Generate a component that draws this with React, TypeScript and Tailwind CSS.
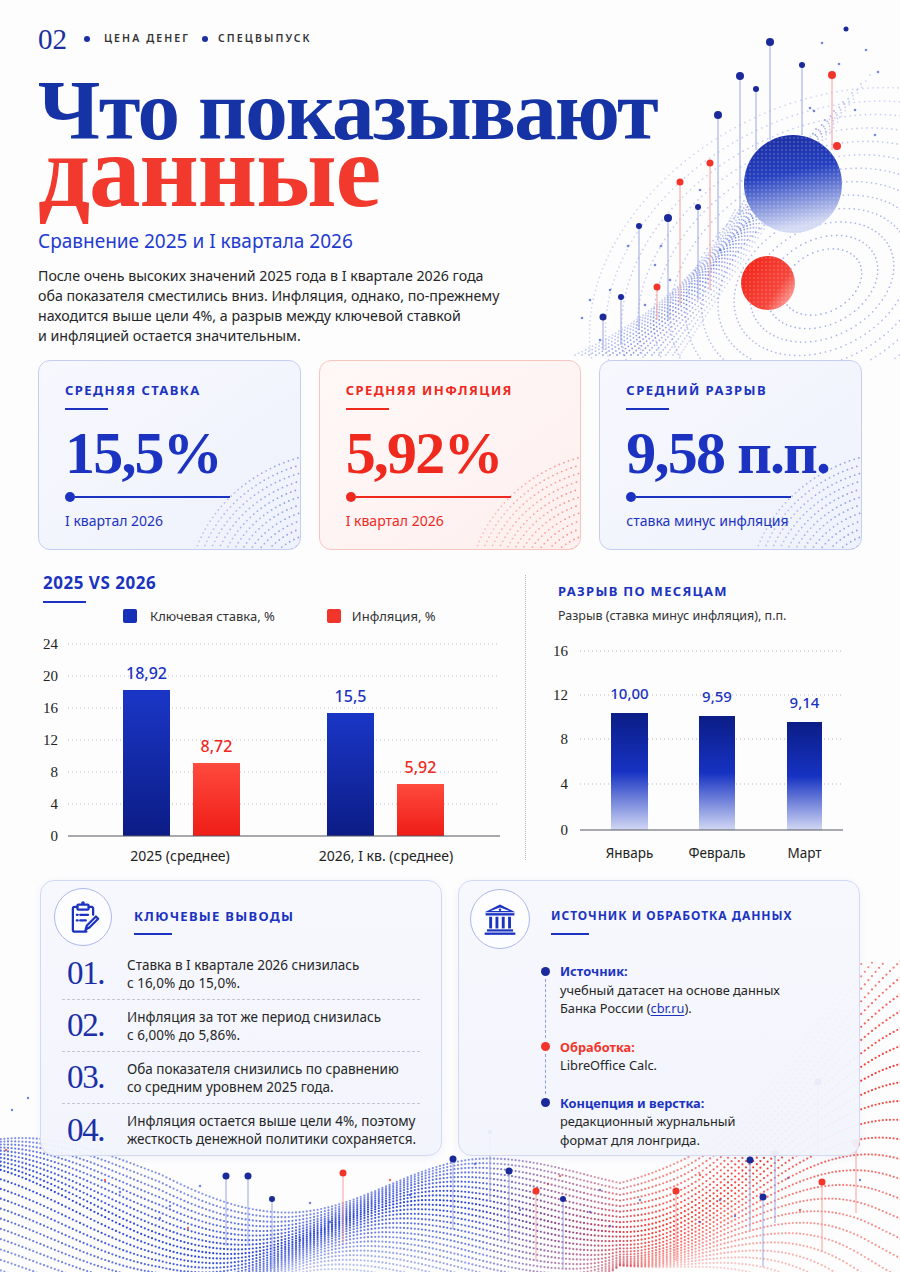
import React from 'react';

type Dot = { x: number; y: number; r: number; c: string; o: number };

const BLUE_RGB = [30, 58, 210];
const RED_RGB = [242, 50, 40];

function mixColor(t: number) {
  const k = Math.max(0, Math.min(1, t));
  const c = BLUE_RGB.map((b, i) => Math.round(b + (RED_RGB[i] - b) * k));
  return `rgb(${c[0]},${c[1]},${c[2]})`;
}

// base line of the bottom wave (page coordinates)
const wavePts: [number, number][] = [
  [-60, 1160],
  [230, 1254],
  [430, 1200],
  [625, 1232],
  [930, 1060],
];

function baseY(x: number) {
  for (let i = 0; i < wavePts.length - 1; i++) {
    const [x0, y0] = wavePts[i];
    const [x1, y1] = wavePts[i + 1];
    if (x >= x0 && x <= x1) {
      const t = (x - x0) / (x1 - x0);
      const s = (1 - Math.cos(Math.PI * t)) / 2;
      return y0 + (y1 - y0) * s;
    }
  }
  return wavePts[wavePts.length - 1][1];
}

const waveDots: Dot[] = (() => {
  const out: Dot[] = [];
  const N = 26;
  for (let i = 0; i < N; i++) {
    const off = (i - 9) * 4.6;
    const op = Math.max(0.2, 0.95 - Math.abs(i - 9) * 0.045);
    for (let x = -10; x <= 910; x += 3.6) {
      const up = off < 0 ? Math.max(0, (160 - x) / 160) * -0.5 : Math.max(0, (160 - x) / 160) * 0.6;
      const spread = 1 + Math.max(0, (x - 620) / 110) * 1.3 + up;
      const y = baseY(x + off * 1.4) + off * spread;
      if (y < 960 || y > 1275) continue;
      out.push({ x, y: y - 960, r: 1.1, c: mixColor((x - 470) / 180), o: op });
    }
  }
  return out;
})();

// concentric dotted rings of the top illustration
const ringDots: Dot[] = (() => {
  const out: Dot[] = [];
  const cx = 822;
  const cy = 282;
  const rot = (-28 * Math.PI) / 180;
  for (let k = 0; k < 13; k++) {
    const rx = 42 + k * 17;
    const ry = rx * 0.72;
    const n = Math.round((2 * Math.PI * rx) / 5.5);
    for (let j = 0; j < n; j++) {
      const a = (j / n) * Math.PI * 2;
      const ex = rx * Math.cos(a);
      const ey = ry * Math.sin(a);
      const x = cx + ex * Math.cos(rot) - ey * Math.sin(rot);
      const y = cy + ex * Math.sin(rot) + ey * Math.cos(rot);
      if (y > 360 || x > 905) continue;
      out.push({ x, y, r: 0.85, c: '#4a63d8', o: 0.5 - k * 0.02 });
    }
  }
  return out;
})();

// S-shaped band of dots rising to the blue sphere
const bandDots: Dot[] = (() => {
  const out: Dot[] = [];
  for (let j = 0; j < 16; j++) {
    const p0 = [575 + j * 7, 355];
    const p1 = [690 + j * 3, 300 - j * 2];
    const p2 = [735 + j * 9, 210 - j * 9];
    for (let s = 0; s <= 64; s++) {
      const t = s / 64;
      const x = (1 - t) * (1 - t) * p0[0] + 2 * (1 - t) * t * p1[0] + t * t * p2[0];
      const y = (1 - t) * (1 - t) * p0[1] + 2 * (1 - t) * t * p1[1] + t * t * p2[1];
      out.push({ x, y, r: 0.9, c: '#2d48d2', o: 0.6 - Math.abs(j - 7) * 0.05 });
    }
  }
  return out;
})();

const topStems = [
  { x: 770, y: 42, to: 140, c: '#1a2a9a', r: 4 },
  { x: 740, y: 76, to: 215, c: '#1a2a9a', r: 4 },
  { x: 756, y: 89, to: 150, c: '#1a2a9a', r: 3 },
  { x: 718, y: 115, to: 240, c: '#1a2a9a', r: 4 },
  { x: 802, y: 65, to: 135, c: '#1a2a9a', r: 3 },
  { x: 846, y: 29, to: 29, c: '#1a2a9a', r: 2.5 },
  { x: 832, y: 75, to: 150, c: '#f2352b', r: 4 },
  { x: 837, y: 146, to: 146, c: '#f2352b', r: 4 },
  { x: 710, y: 163, to: 290, c: '#f2352b', r: 3.5 },
  { x: 680, y: 182, to: 305, c: '#f2352b', r: 3.5 },
  { x: 698, y: 207, to: 300, c: '#1a2a9a', r: 3 },
  { x: 668, y: 218, to: 320, c: '#1a2a9a', r: 4 },
  { x: 639, y: 226, to: 330, c: '#1a2a9a', r: 3 },
  { x: 657, y: 287, to: 320, c: '#f2352b', r: 3.5 },
  { x: 621, y: 297, to: 345, c: '#1a2a9a', r: 3 },
  { x: 603, y: 317, to: 350, c: '#1a2a9a', r: 3.5 },
];

const topSpecks = [
  [661, 246], [628, 246], [655, 265], [610, 290], [582, 318], [600, 340], [645, 305], [670, 280],
  [822, 43], [866, 50], [839, 64], [878, 72], [810, 108], [814, 111], [855, 110], [875, 135],
  [700, 190], [720, 250], [590, 300],
];

const bottomStems = [
  { x: 226, y: 1176, c: '#1a2a9a', r: 3.5 },
  { x: 248, y: 1176, c: '#1a2a9a', r: 3.5 },
  { x: 343, y: 1173, c: '#f2352b', r: 3.5 },
  { x: 272, y: 1199, c: '#1a2a9a', r: 3 },
  { x: 453, y: 1159, c: '#1a2a9a', r: 3.5 },
  { x: 509, y: 1171, c: '#1a2a9a', r: 3.5 },
  { x: 536, y: 1191, c: '#f2352b', r: 3.5 },
  { x: 676, y: 1191, c: '#f2352b', r: 3.5 },
  { x: 563, y: 1199, c: '#1a2a9a', r: 3 },
  { x: 750, y: 1160, c: '#1a2a9a', r: 3.5 },
  { x: 775, y: 1153, c: '#1a2a9a', r: 3 },
  { x: 763, y: 1197, c: '#1a2a9a', r: 3.5 },
  { x: 856, y: 1143, c: '#f2352b', r: 4 },
  { x: 822, y: 1182, c: '#f2352b', r: 3.5 },
  { x: 818, y: 1082, c: '#1a2a9a', r: 3.5 },
  { x: 490, y: 1132, c: '#1a2a9a', r: 2 },
];

const bottomSpecks = [
  [105, 1180], [120, 1192], [170, 1206], [160, 1218], [188, 1228], [200, 1186], [310, 1203],
  [330, 1222], [390, 1180], [410, 1195], [475, 1164], [520, 1210], [548, 1184], [590, 1212],
  [610, 1226], [640, 1200], [700, 1175], [720, 1200], [735, 1216], [788, 1178], [800, 1210],
  [700, 1222], [600, 1190], [300, 1240], [560, 1176], [860, 1180], [12, 1110], [28, 1098], [6, 1150],
];

function TopArt() {
  return (
    <svg className="absolute left-0 top-0 pointer-events-none" width={900} height={365} viewBox="0 0 900 365">
      <defs>
        <linearGradient id="blueSphere" x1="0" y1="0" x2="0.2" y2="1">
          <stop offset="0" stopColor="#1c2c9e" />
          <stop offset="0.45" stopColor="#2540c0" />
          <stop offset="1" stopColor="#d4daf4" />
        </linearGradient>
        <linearGradient id="redSphere" x1="0" y1="0.3" x2="1" y2="1">
          <stop offset="0" stopColor="#f2261c" />
          <stop offset="0.6" stopColor="#f5463c" />
          <stop offset="1" stopColor="#ffc9c4" />
        </linearGradient>
        <pattern id="sphereDots" width="4" height="4" patternUnits="userSpaceOnUse">
          <circle cx="2" cy="2" r="0.8" fill="#ffffff" />
        </pattern>
      </defs>
      {ringDots.map((d, i) => (
        <circle key={`r${i}`} cx={d.x} cy={d.y} r={d.r} fill={d.c} opacity={d.o} />
      ))}
      {bandDots.map((d, i) => (
        <circle key={`b${i}`} cx={d.x} cy={d.y} r={d.r} fill={d.c} opacity={d.o} />
      ))}
      {topStems.map((s, i) => (
        <g key={`s${i}`}>
          <line x1={s.x} y1={s.y} x2={s.x} y2={s.to} stroke={s.c === '#f2352b' ? '#f6a09a' : '#9aa6e0'} strokeWidth={1} />
          <circle cx={s.x} cy={s.y} r={s.r} fill={s.c} />
        </g>
      ))}
      {topSpecks.map(([x, y], i) => (
        <circle key={`p${i}`} cx={x} cy={y} r={1.3} fill="#3d55d0" opacity={0.7} />
      ))}
      <circle cx={793} cy={184} r={49} fill="url(#blueSphere)" />
      <circle cx={793} cy={184} r={49} fill="url(#sphereDots)" opacity={0.35} />
      <circle cx={768} cy={283} r={27} fill="url(#redSphere)" />
      <circle cx={768} cy={283} r={27} fill="url(#sphereDots)" opacity={0.3} />
    </svg>
  );
}

function BottomArt() {
  return (
    <svg className="absolute left-0 top-[960px] pointer-events-none" width={900} height={312} viewBox="0 0 900 312">
      {waveDots.map((d, i) => (
        <circle key={`w${i}`} cx={d.x} cy={d.y} r={d.r} fill={d.c} opacity={d.o} />
      ))}
      {bottomStems.map((s, i) => (
        <g key={`bs${i}`}>
          <line x1={s.x} y1={s.y - 960} x2={s.x} y2={s.y - 960 + 70} stroke={s.c === '#f2352b' ? '#f6a09a' : '#9aa6e0'} strokeWidth={1} />
          <circle cx={s.x} cy={s.y - 960} r={s.r} fill={s.c} />
        </g>
      ))}
      {bottomSpecks.map(([x, y], i) => (
        <circle key={`bp${i}`} cx={x} cy={y - 960} r={1.2} fill={i % 4 === 0 ? '#f2352b' : '#3d55d0'} opacity={0.75} />
      ))}
    </svg>
  );
}

function CornerDots({ color }: { color: string }) {
  const dots: { x: number; y: number; o: number }[] = [];
  for (let k = 0; k < 12; k++) {
    const R = 60 + k * 9;
    const n = Math.round((R * Math.PI) / 2 / 5);
    for (let j = 0; j <= n; j++) {
      const a = Math.PI + (j / n) * (Math.PI / 2);
      const x = 175 + R * Math.cos(a) + k * 2;
      const y = 175 + R * Math.sin(a) * 0.9;
      if (x < 0 || y < 0 || x > 150 || y > 130) continue;
      dots.push({ x, y, o: 0.15 + (x / 150) * 0.35 });
    }
  }
  return (
    <svg className="absolute right-0 bottom-0 pointer-events-none" width={150} height={130} viewBox="0 0 150 130">
      {dots.map((d, i) => (
        <circle key={i} cx={d.x} cy={d.y} r={0.9} fill={color} opacity={d.o} />
      ))}
    </svg>
  );
}

interface StatCardProps {
  label: string;
  value: string;
  note: string;
  red?: boolean;
}

function StatCard({ label, value, note, red }: StatCardProps) {
  const accent = red ? 'text-[#f0291f]' : 'text-[#1b33c0]';
  return (
    <div
      className={`relative h-[190px] overflow-hidden rounded-[12px] border px-[26px] pt-[20px] ${
        red ? 'border-[#f8c4c0] bg-gradient-to-br from-[#fff8f7] to-[#fdf0ef]' : 'border-[#c6cdf2] bg-gradient-to-br from-[#f7f8fe] to-[#eff2fc]'
      }`}
    >
      <CornerDots color={red ? '#f2352b' : '#2d48d2'} />
      <div className={`relative whitespace-nowrap text-[13px] font-bold leading-[18px] tracking-[0.11em] ${accent}`}>{label}</div>
      <div className={`relative mt-[9px] h-[2px] w-[43px] ${red ? 'bg-[#f0291f]' : 'bg-[#1b33c0]'}`} />
      <div
        className={`relative mt-[8px] whitespace-nowrap font-['Liberation_Serif',serif] text-[60px] font-bold leading-[70px] tracking-[-0.03em] ${accent}`}
      >
        {value}
      </div>
      <div className="relative mt-[4px] flex items-center">
        <div className={`h-[10px] w-[10px] rounded-full ${red ? 'bg-[#f0291f]' : 'bg-[#1b33c0]'}`} />
        <div className={`h-[1.5px] w-[155px] ${red ? 'bg-[#f0291f]' : 'bg-[#1b33c0]'}`} />
      </div>
      <div className={`relative mt-[9px] text-[14px] leading-[20px] ${accent}`}>{note}</div>
    </div>
  );
}

function ClipboardIcon() {
  return (
    <svg width={36} height={36} viewBox="0 0 32 32" fill="none" stroke="#1b33c0" strokeWidth={2} strokeLinecap="round" strokeLinejoin="round">
      <path d="M11 7H8.5A1.5 1.5 0 0 0 7 8.5v19A1.5 1.5 0 0 0 8.5 29H19" />
      <path d="M21 7h2.5A1.5 1.5 0 0 1 25 8.5V14" />
      <rect x="11" y="5" width="10" height="4.5" rx="1" />
      <circle cx="16" cy="3.6" r="1" fill="#1b33c0" strokeWidth={1.2} />
      <path d="M10.5 14h0.8M13.5 14h7M10.5 19h0.8M13.5 19h5" />
      <path d="M27.5 15.5l2 2-8 8-3 1 1-3z" />
      <path d="M19.5 26.5l-1.5 1.5" />
    </svg>
  );
}

function BankIcon() {
  return (
    <svg width={36} height={36} viewBox="0 0 40 40" fill="#1b33c0">
      <path d="M20 4 L37 12.5 H3 Z M20 7.2 L9.5 11 H30.5 Z" fillRule="evenodd" />
      <circle cx={20} cy={9.6} r={1.4} fill="#1b33c0" />
      <rect x="4" y="13.5" width="32" height="2.6" />
      <rect x="8" y="17.5" width="3.2" height="13" />
      <rect x="15" y="17.5" width="3.2" height="13" />
      <rect x="22" y="17.5" width="3.2" height="13" />
      <rect x="29" y="17.5" width="3.2" height="13" />
      <rect x="5.5" y="31.5" width="29" height="2.4" />
      <rect x="3" y="35" width="34" height="2.6" />
    </svg>
  );
}

const findings = [
  ['01.', 'Ставка в I квартале 2026 снизилась', 'с 16,0% до 15,0%.'],
  ['02.', 'Инфляция за тот же период снизилась', 'с 6,00% до 5,86%.'],
  ['03.', 'Оба показателя снизились по сравнению', 'со средним уровнем 2025 года.'],
  ['04.', 'Инфляция остается выше цели 4%, поэтому', 'жесткость денежной политики сохраняется.'],
];

function CompareChart() {
  const grid = [24, 20, 16, 12, 8, 4];
  const y = (v: number) => 836 - v * 8;
  const bars = [
    { x: 123, top: 690, c: 'url(#barBlue)', label: '18,92', lc: '#1b33c0' },
    { x: 193, top: 763, c: 'url(#barRed)', label: '8,72', lc: '#f0291f' },
    { x: 327, top: 713, c: 'url(#barBlue)', label: '15,5', lc: '#1b33c0' },
    { x: 397, top: 784, c: 'url(#barRed)', label: '5,92', lc: '#f0291f' },
  ];
  return (
    <svg width={470} height={240} viewBox="38 628 470 240" className="block">
      <defs>
        <linearGradient id="barBlue" x1="0" y1="0" x2="0" y2="1">
          <stop offset="0" stopColor="#1a36c6" />
          <stop offset="1" stopColor="#0c1c86" />
        </linearGradient>
        <linearGradient id="barRed" x1="0" y1="0" x2="0" y2="1">
          <stop offset="0" stopColor="#ff4a3e" />
          <stop offset="1" stopColor="#ee1d17" />
        </linearGradient>
      </defs>
      {grid.map((v) => (
        <g key={v}>
          <line x1={68} x2={500} y1={y(v)} y2={y(v)} stroke="#b8b8c0" strokeWidth={1} strokeDasharray="1 3" />
          <text x={58} y={y(v) + 5} textAnchor="end" fontFamily="Liberation Serif, serif" fontSize={15} fill="#222">
            {v}
          </text>
        </g>
      ))}
      <text x={58} y={841} textAnchor="end" fontFamily="Liberation Serif, serif" fontSize={15} fill="#222">
        0
      </text>
      {bars.map((b) => (
        <g key={b.x}>
          <rect x={b.x} y={b.top} width={47} height={836 - b.top} fill={b.c} />
          <text x={b.x + 23.5} y={b.top - 11} textAnchor="middle" fontFamily="Noto Sans, sans-serif" fontSize={16} fontWeight={500} fill={b.lc}>
            {b.label}
          </text>
        </g>
      ))}
      <line x1={68} x2={500} y1={836} y2={836} stroke="#55565e" strokeWidth={1.2} />
      <text x={180} y={861} textAnchor="middle" fontFamily="Noto Sans, sans-serif" fontSize={14} fill="#222">
        2025 (среднее)
      </text>
      <text x={386} y={861} textAnchor="middle" fontFamily="Noto Sans, sans-serif" fontSize={14} fill="#222">
        2026, I кв. (среднее)
      </text>
    </svg>
  );
}

function GapChart() {
  const ticks = [
    [16, 651],
    [12, 695],
    [8, 739],
    [4, 784],
  ];
  const bars = [
    { x: 611, w: 37, top: 713, label: '10,00', name: 'Январь' },
    { x: 699, w: 36, top: 716, label: '9,59', name: 'Февраль' },
    { x: 787, w: 35, top: 722, label: '9,14', name: 'Март' },
  ];
  return (
    <svg width={300} height={240} viewBox="550 628 300 240" className="block">
      <defs>
        <linearGradient id="gapBar" x1="0" y1="0" x2="0" y2="1">
          <stop offset="0" stopColor="#0b1d86" />
          <stop offset="0.5" stopColor="#1632c2" />
          <stop offset="1" stopColor="#d2d8f4" />
        </linearGradient>
      </defs>
      {ticks.map(([v, ty]) => (
        <g key={v}>
          <line x1={580} x2={843} y1={ty} y2={ty} stroke="#b8b8c0" strokeWidth={1} strokeDasharray="1 3" />
          <text x={568} y={ty + 5} textAnchor="end" fontFamily="Liberation Serif, serif" fontSize={15} fill="#222">
            {v}
          </text>
        </g>
      ))}
      <text x={568} y={835} textAnchor="end" fontFamily="Liberation Serif, serif" fontSize={15} fill="#222">
        0
      </text>
      {bars.map((b) => (
        <g key={b.name}>
          <rect x={b.x} y={b.top} width={b.w} height={830 - b.top} fill="url(#gapBar)" />
          <text x={b.x + b.w / 2} y={b.top - 14} textAnchor="middle" fontFamily="Noto Sans, sans-serif" fontSize={15} fontWeight={500} fill="#1b33c0">
            {b.label}
          </text>
          <text x={b.x + b.w / 2} y={858} textAnchor="middle" fontFamily="Noto Sans, sans-serif" fontSize={13.5} fill="#222">
            {b.name}
          </text>
        </g>
      ))}
      <line x1={580} x2={843} y1={830} y2={830} stroke="#55565e" strokeWidth={1.2} />
    </svg>
  );
}

export default function App() {
  return (
    <div className="relative h-[1272px] w-[900px] overflow-hidden bg-[#fdfdfe] font-['Noto_Sans',sans-serif] text-[#222]">
      <TopArt />
      <BottomArt />

      <div className="relative px-[38px] pt-[24px]">
        {/* header */}
        <div className="flex h-[30px] items-center">
          <span className="font-['Liberation_Serif',serif] text-[29px] leading-none text-[#1b2f9e]">02</span>
          <span className="ml-[17px] h-[6px] w-[6px] rounded-full bg-[#1b2f9e]" />
          <span className="ml-[14px] text-[10.5px] font-semibold tracking-[0.2em] text-[#333]">ЦЕНА ДЕНЕГ</span>
          <span className="ml-[12px] h-[6px] w-[6px] rounded-full bg-[#1b2f9e]" />
          <span className="ml-[10px] text-[10.5px] font-semibold tracking-[0.2em] text-[#333]">СПЕЦВЫПУСК</span>
        </div>

        {/* title */}
        <h1 className="mt-[24px] font-['Liberation_Serif',serif] font-bold">
          <span className="block whitespace-nowrap text-[85px] leading-[64px] tracking-[-0.02em] text-[#1633a6]">Что показывают</span>
          <span className="block whitespace-nowrap text-[103px] leading-[58px] tracking-[-0.01em] text-[#f2392e]">данные</span>
        </h1>

        <div className="mt-[29px] text-[19px] leading-[24px] text-[#1f3bd0]">Сравнение 2025 и I квартала 2026</div>
        <p className="mt-[13px] whitespace-nowrap text-[14.2px] leading-[20px] text-[#262626]">
          После очень высоких значений 2025 года в I квартале 2026 года
          <br />
          оба показателя сместились вниз. Инфляция, однако, по-прежнему
          <br />
          находится выше цели 4%, а разрыв между ключевой ставкой
          <br />и инфляцией остается значительным.
        </p>

        {/* stat cards */}
        <div className="mt-[14px] grid grid-cols-3 gap-[18px]">
          <StatCard label="СРЕДНЯЯ СТАВКА" value="15,5%" note="I квартал 2026" />
          <StatCard label="СРЕДНЯЯ ИНФЛЯЦИЯ" value="5,92%" note="I квартал 2026" red />
          <StatCard label="СРЕДНИЙ РАЗРЫВ" value="9,58 п.п." note="ставка минус инфляция" />
        </div>

        {/* charts */}
        <div className="mt-[15px] flex h-[300px]">
          <div className="w-[470px]">
            <div className="h-[63px] pl-[5px] pt-[8px]">
              <div className="text-[17px] font-bold leading-[20px] tracking-[0.03em] text-[#1b33c0]">2025 VS 2026</div>
              <div className="mt-[8px] h-[2px] w-[43px] bg-[#1b33c0]" />
              <div className="mt-[5px] flex items-center pl-[80px] text-[13px] leading-[16px] text-[#333]">
                <span className="h-[14px] w-[14px] rounded-[2px] bg-[#1630b8]" />
                <span className="ml-[13px]">Ключевая ставка, %</span>
                <span className="ml-[52px] h-[14px] w-[14px] rounded-[2px] bg-[#f2352b]" />
                <span className="ml-[11px]">Инфляция, %</span>
              </div>
            </div>
            <CompareChart />
          </div>
          <div className="ml-[17px] mt-[10px] h-[285px] border-l border-dotted border-[#b5b5c0]" />
          <div className="ml-[24px] w-[300px]">
            <div className="h-[63px] pl-[8px] pt-[17px]">
              <div className="whitespace-nowrap text-[13px] font-bold leading-[18px] tracking-[0.1em] text-[#1b33c0]">РАЗРЫВ ПО МЕСЯЦАМ</div>
              <div className="mt-[8px] whitespace-nowrap text-[12.5px] leading-[16px] text-[#333]">Разрыв (ставка минус инфляция), п.п.</div>
            </div>
            <GapChart />
          </div>
        </div>

        {/* bottom cards */}
        <div className="mt-[15px] grid grid-cols-2 gap-[16px] pl-[2px] pr-[2px]">
          <div className="h-[276px] rounded-[14px] border border-[#d3d8f3] bg-gradient-to-b from-[#f7f8fe]/95 to-[#f2f4fc]/95 px-[13px] pt-[7px] shadow-[0_2px_8px_rgba(40,60,160,0.06)]">
            <div className="flex items-start">
              <div className="flex h-[58px] w-[58px] items-center justify-center rounded-full border-[1.5px] border-[#aeb8ec] bg-white/70">
                <ClipboardIcon />
              </div>
              <div className="ml-[22px] pt-[19px]">
                <div className="text-[13px] font-bold leading-[18px] tracking-[0.1em] text-[#1b33c0]">КЛЮЧЕВЫЕ ВЫВОДЫ</div>
                <div className="mt-[8px] h-[2px] w-[38px] bg-[#1b33c0]" />
              </div>
            </div>
            <div className="mt-[2px] px-[8px]">
              {findings.map(([n, a, b], i) => (
                <div
                  key={n}
                  className={`flex h-[52px] items-center ${i < findings.length - 1 ? 'border-b border-dashed border-[#c4c6d2]' : ''}`}
                >
                  <div className="w-[65px] pl-[5px] font-['Liberation_Serif',serif] text-[33px] leading-none tracking-[-0.04em] text-[#1b2fa6]">
                    {n}
                  </div>
                  <div className="whitespace-nowrap text-[13.5px] leading-[18px] text-[#262626]">
                    <div>{a}</div>
                    <div>{b}</div>
                  </div>
                </div>
              ))}
            </div>
          </div>

          <div className="h-[276px] rounded-[14px] border border-[#d3d8f3] bg-gradient-to-b from-[#f7f8fe]/95 to-[#f2f4fc]/95 px-[11px] pt-[8px] shadow-[0_2px_8px_rgba(40,60,160,0.06)]">
            <div className="flex items-start">
              <div className="flex h-[60px] w-[60px] items-center justify-center rounded-full border-[1.5px] border-[#aeb8ec] bg-white/70">
                <BankIcon />
              </div>
              <div className="ml-[21px] pt-[18px]">
                <div className="whitespace-nowrap text-[12px] font-bold leading-[18px] tracking-[0.08em] text-[#1b33c0]">ИСТОЧНИК И ОБРАБОТКА ДАННЫХ</div>
                <div className="mt-[8px] h-[2px] w-[38px] bg-[#1b33c0]" />
              </div>
            </div>
            <div className="ml-[70px] mt-[13px] text-[12.8px] leading-[18.5px]">
              <div className="flex">
                <div className="flex w-[10px] flex-col items-center">
                  <span className="mt-[4.5px] h-[9px] w-[9px] shrink-0 rounded-full bg-[#1a2a9a]" />
                  <span className="mt-[3px] flex-1 border-l border-dashed border-[#8f9ee2]" />
                </div>
                <div className="ml-[10px] pb-[20px]">
                  <div className="font-bold text-[#1b33c0]">Источник:</div>
                  <div className="text-[#262626]">учебный датасет на основе данных</div>
                  <div className="text-[#262626]">
                    Банка России (<span className="text-[#1b33c0] underline underline-offset-2">cbr.ru</span>).
                  </div>
                </div>
              </div>
              <div className="flex">
                <div className="flex w-[10px] flex-col items-center">
                  <span className="mt-[4.5px] h-[9px] w-[9px] shrink-0 rounded-full bg-[#f2352b]" />
                  <span className="mt-[3px] flex-1 border-l border-dashed border-[#8f9ee2]" />
                </div>
                <div className="ml-[10px] pb-[19px]">
                  <div className="font-bold text-[#f2352b]">Обработка:</div>
                  <div className="text-[#262626]">LibreOffice Calc.</div>
                </div>
              </div>
              <div className="flex">
                <div className="flex w-[10px] flex-col items-center">
                  <span className="mt-[4.5px] h-[9px] w-[9px] shrink-0 rounded-full bg-[#1a2a9a]" />
                </div>
                <div className="ml-[10px]">
                  <div className="font-bold text-[#1b33c0]">Концепция и верстка:</div>
                  <div className="text-[#262626]">редакционный журнальный</div>
                  <div className="text-[#262626]">формат для лонгрида.</div>
                </div>
              </div>
            </div>
          </div>
        </div>
      </div>
    </div>
  );
}
